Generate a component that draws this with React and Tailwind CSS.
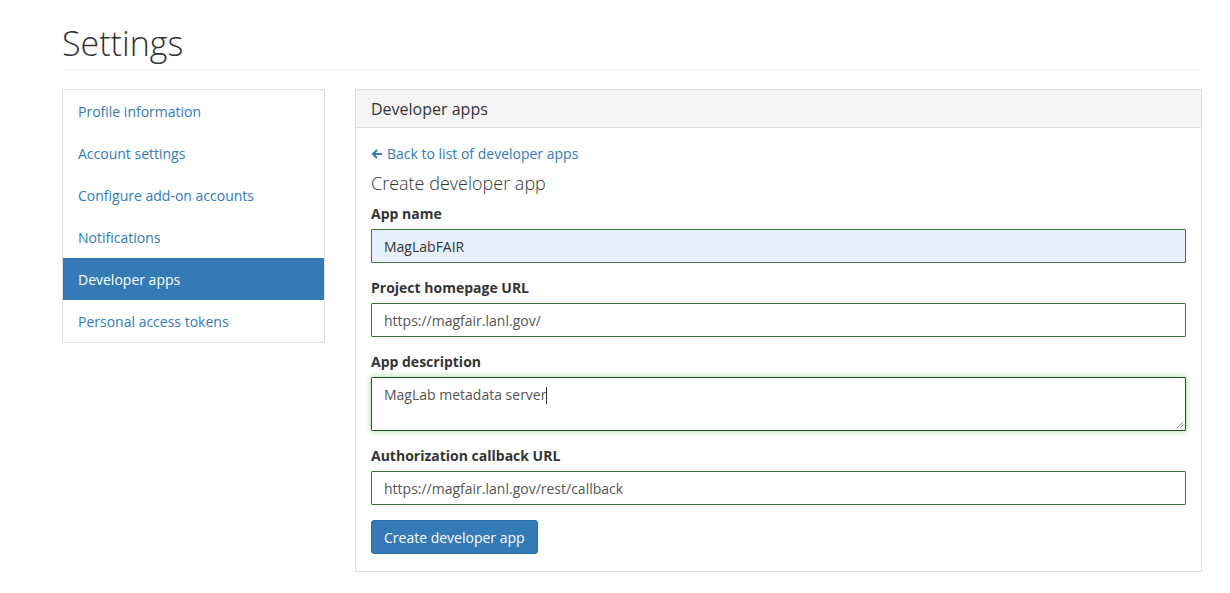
import React from "react";

export default function App() {
  const nav = [
    "Profile information",
    "Account settings",
    "Configure add-on accounts",
    "Notifications",
    "Developer apps",
    "Personal access tokens",
  ];
  return (
    <div className="min-h-[593px] bg-white text-[14px] text-[#333]" style={{ fontFamily: '"Open Sans", sans-serif' }}>
      <div className="pl-[62px] pr-[28px]">
        <div className="pt-[22px] pb-[5px] border-b border-[#eee]">
          <h1 className="text-[34px] leading-[42px] font-light text-[#333]">Settings</h1>
        </div>
        <div className="flex gap-[30px] mt-[19px]">
          <div className="w-[263px] shrink-0">
            <div className="border border-[#ddd] flex flex-col">
              {nav.map((n) => (
                <div
                  key={n}
                  className={
                    "h-[42px] flex items-center px-[15px] " +
                    (n === "Developer apps" ? "bg-[#337ab7] text-white" : "text-[#337ab7]")
                  }
                >
                  {n}
                </div>
              ))}
            </div>
          </div>
          <div className="flex-1 border border-[#ddd]">
            <div className="h-[38px] bg-[#f5f5f5] border-b border-[#ddd] px-[15px] flex items-center text-[16px] text-[#333]">
              Developer apps
            </div>
            <div className="px-[15px] pt-[16px] pb-[17px]">
              <div className="flex items-center gap-[3px] text-[#337ab7] leading-[20px]">
                <svg width="12" height="12" viewBox="0 0 12 12" className="mr-[1px]">
                  <path d="M11 6H2.5M6 2L2 6l4 4" stroke="#337ab7" strokeWidth="2" fill="none" strokeLinejoin="miter" />
                </svg>
                Back to list of developer apps
              </div>
              <div className="text-[18px] font-light text-[#333] leading-[26px] mt-[6px]">Create developer app</div>
              <div className="mt-[8px]">
                <label className="block font-bold leading-[20px] mb-[5px]">App name</label>
                <div className="h-[34px] border border-[#3c763d] bg-[#e8f0fe] px-[12px] flex items-center text-[#333] rounded-[1px]">
                  MagLabFAIR
                </div>
              </div>
              <div className="mt-[15px]">
                <label className="block font-bold leading-[20px] mb-[5px]">Project homepage URL</label>
                <div className="h-[34px] border border-[#3c763d] bg-white px-[12px] flex items-center text-[#555] rounded-[1px]">
                  https://magfair.lanl.gov/
                </div>
              </div>
              <div className="mt-[15px]">
                <label className="block font-bold leading-[20px] mb-[5px]">App description</label>
                <div className="relative h-[54px] border border-[#2b542c] bg-white px-[12px] pt-[6px] text-[#555] rounded-[1px] shadow-[0_0_6px_#9fd39f]">
                  <span>MagLab metadata server</span>
                  <span className="inline-block w-px h-[17px] bg-[#333] align-middle -mt-[2px]"></span>
                  <svg width="8" height="8" viewBox="0 0 8 8" className="absolute right-[1px] bottom-[1px]">
                    <path d="M7 1L1 7M7 4L4 7" stroke="#888" strokeWidth="1" />
                  </svg>
                </div>
              </div>
              <div className="mt-[15px]">
                <label className="block font-bold leading-[20px] mb-[5px]">Authorization callback URL</label>
                <div className="h-[34px] border border-[#3c763d] bg-white px-[12px] flex items-center text-[#555] rounded-[1px]">
                  https://magfair.lanl.gov/rest/callback
                </div>
              </div>
              <div className="mt-[15px]">
                <button className="h-[34px] px-[12px] bg-[#337ab7] border border-[#2e6da4] text-white rounded-[3px]">
                  Create developer app
                </button>
              </div>
            </div>
          </div>
        </div>
      </div>
    </div>
  );
}
